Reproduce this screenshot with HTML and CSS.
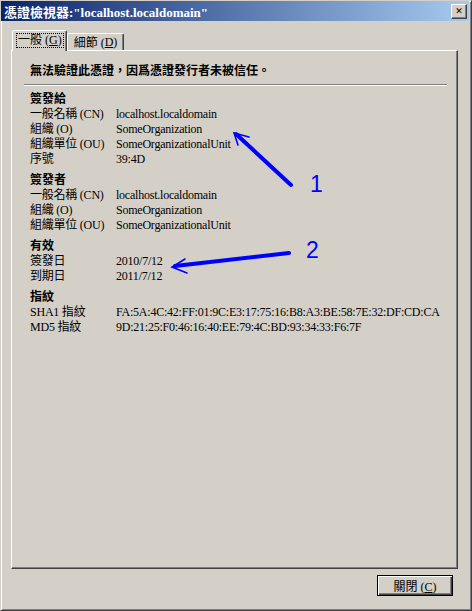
FILE: index.html
```html
<!DOCTYPE html>
<html lang="zh-Hant">
<head>
    <meta charset="UTF-8">
    <title>憑證檢視器</title>
    <link rel="stylesheet" href="styles.css">
</head>
<body>
    <div class="window">
        <div class="titlebar">
            <span class="title">憑證檢視器:"localhost.localdomain"</span>
            <button class="close" type="button">&#x2715;</button>
        </div>

        <div class="content">
            <div class="tabs">
                <div class="tab active"><span class="focus">一般 (<u>G</u>)</span></div>
                <div class="tab">細節 (<u>D</u>)</div>
            </div>

            <div class="panel">
                <p class="warning">無法驗證此憑證，因爲憑證發行者未被信任。</p>
                <div class="sep"></div>

                <div class="group">
                    <h2>簽發給</h2>
                    <div class="fields">
                        <span>一般名稱 (CN)</span><span>localhost.localdomain</span>
                        <span>組織 (O)</span><span>SomeOrganization</span>
                        <span>組織單位 (OU)</span><span>SomeOrganizationalUnit</span>
                        <span>序號</span><span>39:4D</span>
                    </div>
                </div>

                <div class="group">
                    <h2>簽發者</h2>
                    <div class="fields">
                        <span>一般名稱 (CN)</span><span>localhost.localdomain</span>
                        <span>組織 (O)</span><span>SomeOrganization</span>
                        <span>組織單位 (OU)</span><span>SomeOrganizationalUnit</span>
                    </div>
                </div>

                <div class="group">
                    <h2>有效</h2>
                    <div class="fields">
                        <span>簽發日</span><span>2010/7/12</span>
                        <span>到期日</span><span>2011/7/12</span>
                    </div>
                </div>

                <div class="group">
                    <h2>指紋</h2>
                    <div class="fields">
                        <span>SHA1 指紋</span><span>FA:5A:4C:42:FF:01:9C:E3:17:75:16:B8:A3:BE:58:7E:32:DF:CD:CA</span>
                        <span>MD5 指紋</span><span>9D:21:25:F0:46:16:40:EE:79:4C:BD:93:34:33:F6:7F</span>
                    </div>
                </div>
            </div>

            <div class="footer">
                <button class="btn" type="button">關閉 (<u>C</u>)</button>
            </div>
        </div>

        <!-- annotations drawn over the dialog -->
        <svg class="notes" width="472" height="611" viewBox="0 0 472 611">
            <g stroke="#0000ff" fill="none" stroke-linecap="round">
                <line x1="291" y1="185" x2="236" y2="134" stroke-width="4"/>
                <polyline points="249,137 234,133 238,145" stroke-width="1.6"/>
                <line x1="289" y1="253" x2="175" y2="266" stroke-width="4"/>
                <polyline points="185,259 172,267 187,273" stroke-width="1.6"/>
            </g>
            <text x="310" y="192" class="num">1</text>
            <text x="306" y="258" class="num">2</text>
        </svg>
    </div>
</body>
</html>
```

FILE: styles.css
```css
html, body {
    margin: 0;
    height: 100%;
}

body {
    background: #d4d0c8;
    font-family: "Liberation Serif", "Noto Sans CJK TC", serif;
    font-size: 12px;
    color: #000;
}

.window {
    position: relative;
    box-sizing: border-box;
    height: 611px;
    display: flex;
    flex-direction: column;
    background: #d4d0c8;
    border: 1px solid;
    border-color: #d4d0c8 #404040 #404040 #d4d0c8;
    box-shadow: inset 1px 1px #fff, inset -1px -1px #808080;
    padding: 0 2px 2px 0;
}

.titlebar {
    height: 20px;
    display: flex;
    align-items: center;
    justify-content: space-between;
    background: linear-gradient(to right, #0a246a, #a6caf0);
    padding: 0 2px 0 3px;
}

.title {
    color: #fff;
    font-weight: bold;
    font-size: 13px;
    white-space: nowrap;
}

.close {
    box-sizing: border-box;
    width: 16px;
    height: 15px;
    padding: 0;
    margin: 0;
    background: #d4d0c8;
    border: 1px solid;
    border-color: #fff #404040 #404040 #fff;
    box-shadow: inset -1px -1px #808080;
    font-family: "DejaVu Sans", sans-serif;
    font-size: 9px;
    font-weight: bold;
    line-height: 12px;
    color: #000;
}

.content {
    flex: 1;
    display: flex;
    flex-direction: column;
    padding: 9px 11px 0 10px;
}

/* tabs */
.tabs {
    display: flex;
    align-items: flex-end;
    height: 20px;
    padding-left: 1px;
    position: relative;
    z-index: 1;
}

.tab {
    box-sizing: border-box;
    height: 17px;
    padding: 0 6px;
    display: flex;
    align-items: center;
    border: 1px solid;
    border-bottom: none;
    border-color: #fff #404040 transparent #fff;
    box-shadow: inset -1px 0 #808080;
    border-radius: 2px 2px 0 0;
}

.tab.active {
    height: 21px;
    margin-bottom: -1px;
    padding: 0 3px 2px 4px;
    background: #d4d0c8;
}

.focus {
    outline: 1px dotted #000;
    outline-offset: 0;
    padding: 0 1px;
    line-height: 13px;
}

.panel {
    flex: 1;
    border: 1px solid;
    border-color: #fff #404040 #404040 #fff;
    box-shadow: inset -1px -1px #808080;
    padding-top: 13px;
}

.warning {
    margin: 0 0 0 18px;
    font-weight: bold;
    line-height: 15px;
}

.sep {
    height: 1px;
    margin: 5px 10px 0 12px;
    background: #808080;
    border-bottom: 1px solid #fff;
}

.group {
    margin: 6px 0 0 18px;
}

.group:first-of-type {
    margin-top: 4px;
}

.group h2 {
    margin: 0;
    font-size: 12px;
    font-weight: bold;
    line-height: 15px;
}

.fields {
    display: grid;
    grid-template-columns: 86px 1fr;
    line-height: 15px;
    letter-spacing: -0.23px;
    white-space: nowrap;
}

/* bottom buttons */
.footer {
    display: flex;
    justify-content: flex-end;
    padding: 6px 5px 12px 0;
}

.btn {
    box-sizing: border-box;
    width: 76px;
    height: 21px;
    margin: 0;
    padding: 0;
    background: #d4d0c8;
    border: 1px solid #000;
    box-shadow: inset 1px 1px #fff, inset -1px -1px #404040, inset -2px -2px #808080;
    font-family: "Liberation Serif", "Noto Sans CJK TC", serif;
    font-size: 12px;
    color: #000;
}

.notes {
    position: absolute;
    left: -1px;
    top: -1px;
    pointer-events: none;
}

.num {
    fill: #0000ff;
    font-family: "Liberation Sans", sans-serif;
    font-size: 23px;
}
```
